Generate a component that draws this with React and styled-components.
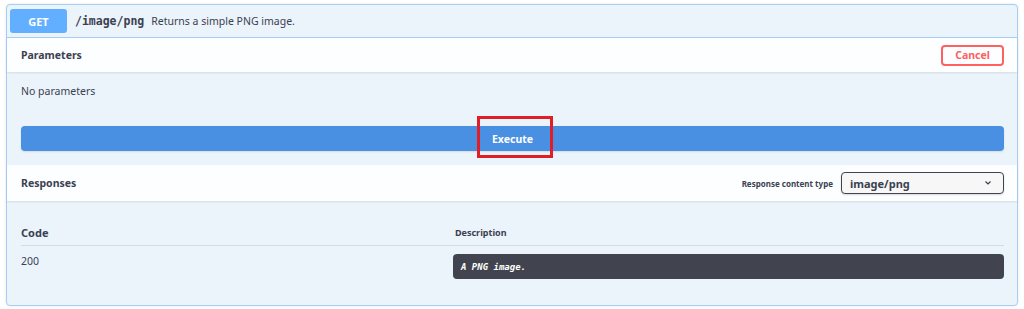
import React from 'react'
import styled, { createGlobalStyle } from 'styled-components'

const GlobalStyle = createGlobalStyle`
  html, body {
    margin: 0;
    padding: 0;
    background: #ffffff;
    font-family: "Noto Sans", "Open Sans", sans-serif;
    color: #3b4151;
  }
`

const Page = styled.div`
  padding: 4px 6px 4px 6px;
`

const Block = styled.div`
  border: 1px solid #a6cff7;
  border-radius: 4px;
  background: #ebf3fb;
  box-shadow: 0 0 3px rgba(0, 0, 0, 0.1);
`

const Summary = styled.div`
  display: flex;
  align-items: center;
  height: 32px;
  padding: 0 3px;
  border-bottom: 1px solid #a6cff7;
`

const Method = styled.span`
  display: flex;
  align-items: center;
  justify-content: center;
  width: 57px;
  height: 24px;
  border-radius: 3px;
  background: #61affe;
  color: #fff;
  font-size: 11px;
  font-weight: 700;
`

const Path = styled.span`
  margin-left: 8px;
  font-family: "DejaVu Sans Mono", "Liberation Mono", monospace;
  font-weight: 700;
  font-size: 11.5px;
  color: #3b4151;
`

const Summary2 = styled.span`
  margin-left: 7px;
  font-size: 10.5px;
  color: #3b4151;
`

const SectionHeader = styled.div`
  display: flex;
  align-items: center;
  justify-content: space-between;
  height: ${p => p.$h || 34}px;
  padding: 0 13px 0 14px;
  background: rgba(255, 255, 255, 0.85);
  box-shadow: 0 1px 2px rgba(0, 0, 0, 0.1);
`

const SectionTitle = styled.h4`
  margin: 0;
  font-size: 10.5px;
  font-weight: 700;
  color: #3b4151;
`

const CancelButton = styled.button`
  width: 63px;
  height: 21px;
  padding: 0;
  border: 2px solid #ff6060;
  border-radius: 4px;
  background: transparent;
  color: #ff6060;
  font-family: inherit;
  font-size: 10.5px;
  font-weight: 700;
`

const ParamsBody = styled.div`
  padding: 12px 14px 0 14px;
  height: 42px;
  font-size: 10.5px;
`

const ExecuteWrap = styled.div`
  position: relative;
  margin: 0 13px 14px 14px;
`

const ExecuteButton = styled.button`
  display: block;
  width: 100%;
  height: 25px;
  border: none;
  border-radius: 4px;
  background: #4990e2;
  color: #fff;
  font-family: inherit;
  font-size: 10.5px;
  font-weight: 700;
  box-shadow: 0 1px 2px rgba(0, 0, 0, 0.1);
`

const Highlight = styled.div`
  position: absolute;
  left: 456px;
  top: -10px;
  width: 76px;
  height: 42px;
  box-sizing: border-box;
  border: 3px solid #e21d26;
  pointer-events: none;
`

const Label = styled.label`
  display: flex;
  align-items: center;
  gap: 8px;
  font-size: 8px;
  font-weight: 700;
`

const Select = styled.div`
  display: flex;
  align-items: center;
  justify-content: space-between;
  box-sizing: border-box;
  width: 163px;
  height: 22px;
  padding: 0 10px 0 8px;
  border: 1px solid #41444e;
  border-radius: 4px;
  background: #f7f7f7;
  box-shadow: 0 1px 2px rgba(0, 0, 0, 0.15);
  font-size: 11px;
  font-weight: 700;
  color: #3b4151;
`

const Table = styled.div`
  display: grid;
  grid-template-columns: 432px 1fr;
  margin: 18px 13px 0 14px;
  padding-bottom: 26px;
`

const HeadCell = styled.div`
  display: flex;
  align-items: center;
  height: 26px;
  padding-left: ${p => p.$pad || 0}px;
  border-bottom: 1px solid #d3dbe5;
  font-size: ${p => p.$size || 10.5}px;
  font-weight: 700;
`

const Cell = styled.div`
  padding-top: 8px;
  font-size: 10.5px;
`

const DescBox = styled.div`
  display: flex;
  align-items: center;
  height: 25px;
  padding: 0 8px;
  border-radius: 4px;
  background: #41444e;
  color: #fff;
  font-family: "DejaVu Sans Mono", "Liberation Mono", monospace;
  font-size: 9px;
  font-weight: 700;
  font-style: italic;
`

const Chevron = () => (
  <svg width="10" height="10" viewBox="0 0 20 20">
    <path d="M5 7l5 5 5-5" fill="none" stroke="#3b4151" strokeWidth="2.4" />
  </svg>
)

export default function App() {
  return (
    <Page>
      <GlobalStyle />
      <Block>
        <Summary>
          <Method>GET</Method>
          <Path>/image/png</Path>
          <Summary2>Returns a simple PNG image.</Summary2>
        </Summary>

        <SectionHeader>
          <SectionTitle>Parameters</SectionTitle>
          <CancelButton>Cancel</CancelButton>
        </SectionHeader>
        <ParamsBody>No parameters</ParamsBody>
        <ExecuteWrap>
          <ExecuteButton>Execute</ExecuteButton>
          <Highlight />
        </ExecuteWrap>

        <SectionHeader $h={36}>
          <SectionTitle>Responses</SectionTitle>
          <Label>
            Response content type
            <Select>
              <span>image/png</span>
              <Chevron />
            </Select>
          </Label>
        </SectionHeader>

        <Table>
          <HeadCell $size={11}>Code</HeadCell>
          <HeadCell $size={9} $pad={2}>Description</HeadCell>
          <Cell>200</Cell>
          <Cell>
            <DescBox>A PNG image.</DescBox>
          </Cell>
        </Table>
      </Block>
    </Page>
  )
}
